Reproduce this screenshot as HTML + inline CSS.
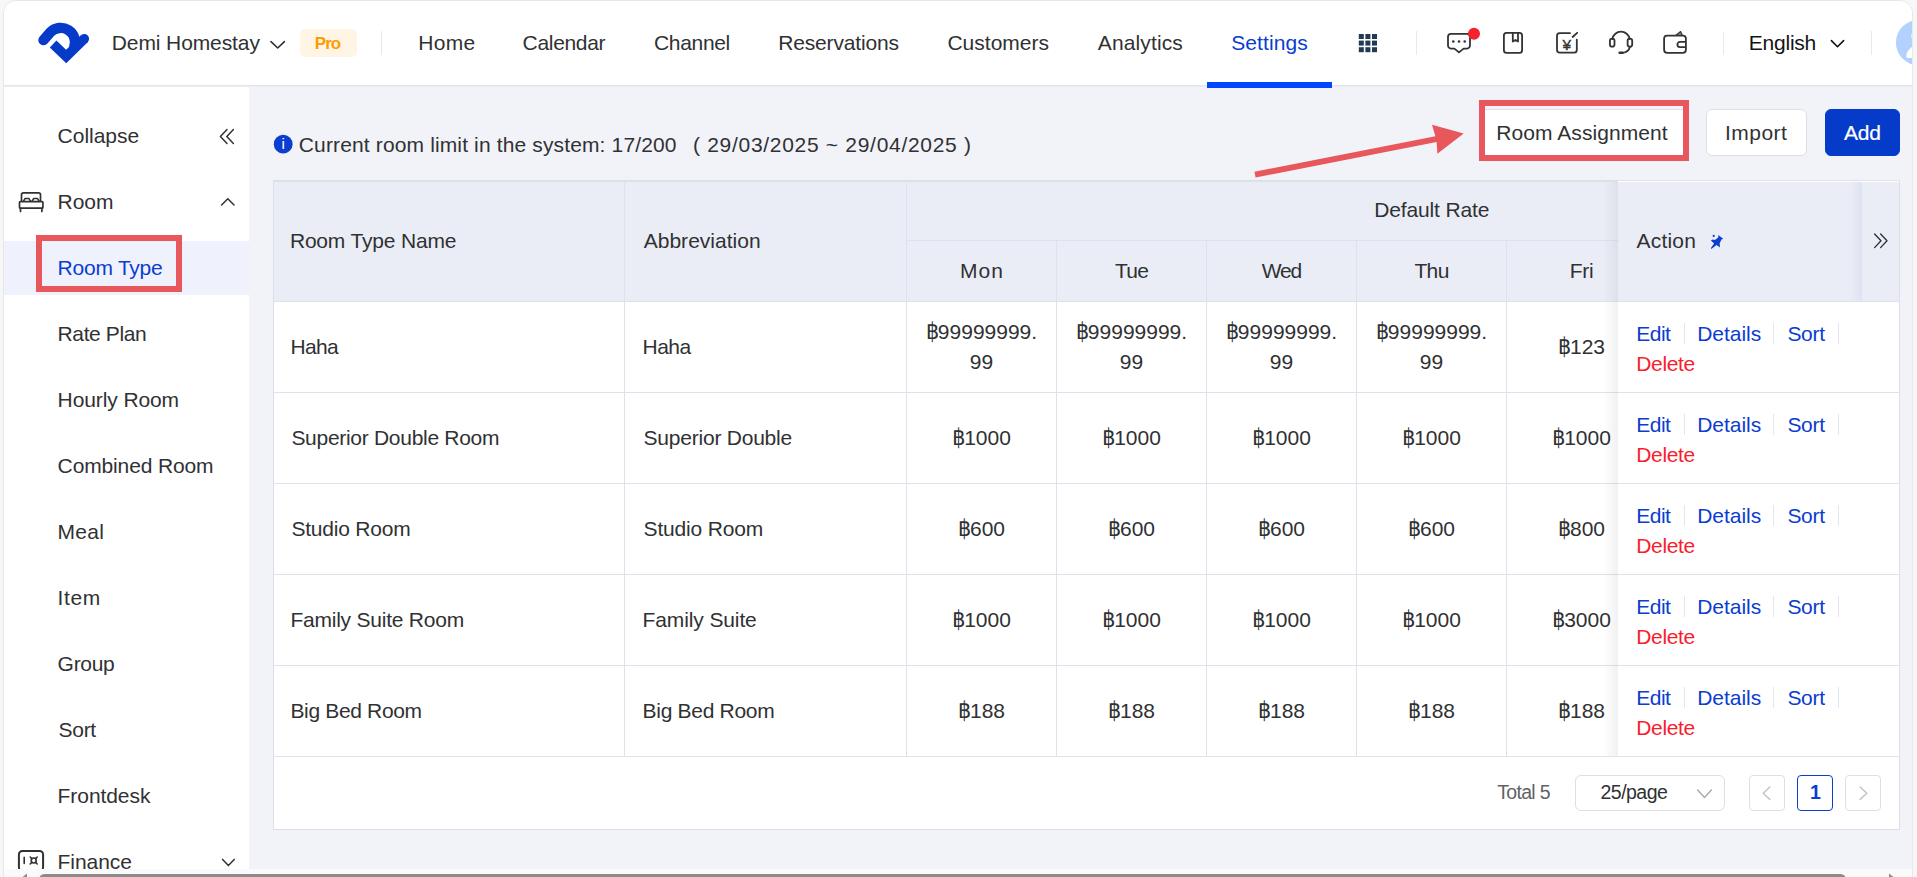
<!DOCTYPE html>
<html lang="en">
<head>
<meta charset="utf-8">
<title>Room Type - Settings</title>
<style>
*{box-sizing:border-box}
html,body{margin:0;padding:0}
body{width:1917px;height:877px;overflow:hidden;background:#f7f7f7;font-family:"Liberation Sans","DejaVu Sans",sans-serif;font-size:21px;color:#303133;position:relative}
.frame{position:absolute;left:3px;top:0;width:1910px;height:900px;border:1px solid #e7e7e7;border-radius:13px 13px 0 0;background:#f2f3f8;overflow:hidden}
/* .app uses page coordinates */
.app{position:absolute;left:-4px;top:-1px;width:1917px;height:877px}
.abs,.app>*{position:absolute}
.grp{position:absolute;left:0;top:0;width:0;height:0}
.t{position:absolute;white-space:nowrap;line-height:23px;height:23px;font-size:21px}
header{left:4px;top:1px;width:1908px;height:84px;background:#fff;box-shadow:0 1px 0 #e3e5ec,0 2px 0 #ecedf3}
.vdiv{width:1px;background:#e8e9ef}
.pro{left:300px;top:29px;width:57px;height:28px;border-radius:5px;background:#fff5e5}
.navline{left:1207px;top:82px;width:125px;height:6px;background:#0047ff}
aside{left:4px;top:87px;width:245px;height:783px;background:#fff}
.active{left:4px;top:241px;width:245px;height:54px;background:#eff2fd}
.redbox{border:6px solid #e8575b}
.btn{height:47px;top:109px;border:1px solid #dcdfe6;border-radius:6px;background:#fff}
.btn.primary{background:#053bc8;border-color:#053bc8}
/* table */
.tbl{left:273px;top:180px;width:1627px;height:650px;background:#fff;border:1px solid #dcdfe8;border-top:2px solid #dde0e9}
.thead{left:274px;top:182px;width:1625px;height:119px;background:#ebedf6}
.hl{height:1px;background:#dfe2ec}
.vl{width:1px;background:#dfe2ec}
.fixcol{left:1618px;top:181px;width:281px;height:575px;background:#fff}
.fixhead{left:1618px;top:182px;width:281px;height:119px;background:#ebedf6}
.shadowL{width:15px;background:linear-gradient(to right,rgba(0,0,0,0),rgba(0,0,20,.055))}
.rc{position:absolute;width:150px;text-align:center;line-height:23px;height:23px;font-size:21px;white-space:nowrap;color:#303133}
.rc .b{font-family:"DejaVu Sans",sans-serif;font-stretch:condensed;font-size:23px;letter-spacing:-1.2px;line-height:20px}
.adiv{width:1px;height:21px;background:#e4e6ee}
.pg{top:775px;height:36px;border:1px solid #dcdfe6;border-radius:4px;background:#fff}
.sb{left:4px;top:869px;width:1908px;height:10px;background:#fafafa}
.thumb{left:38.5px;top:874px;width:1807.5px;height:12px;border-radius:5.5px;background:#8b8b8b}
svg{position:absolute;overflow:visible}
</style>
</head>
<body>
<div class="frame"><div class="app">

<!-- ======= top navigation ======= -->
<header></header>
<div class="pro"></div>
<div class="vdiv" style="left:381px;top:31px;height:24px"></div>
<div class="vdiv" style="left:1416px;top:31px;height:24px"></div>
<div class="vdiv" style="left:1723px;top:32px;height:23px"></div>
<div class="vdiv" style="left:1871px;top:31px;height:24px"></div>
<div class="navline"></div>

<!-- ======= sidebar ======= -->
<aside></aside>
<div class="active"></div>
<svg style="left:0;top:0" width="1917" height="877" viewBox="0 0 1917 877" fill="none">
<!-- logo -->
<g stroke="#053bc8" fill="none">
<path d="M43.5 40.1 L50.5 32.1 A14.4 14.4 0 0 1 74.2 47.2" stroke-width="10.4" stroke-linecap="round"/>
<path d="M53.1 44 L66.2 56.5 L84.3 38.8" stroke-width="9.6" stroke-linejoin="miter"/>
</g>
<circle cx="84.3" cy="38.8" r="4.8" fill="#053bc8"/>
<!-- header chevrons -->
<g stroke="#303133" stroke-width="1.6" stroke-linecap="round" stroke-linejoin="round">
<path d="M271 41.6 L277.7 48 L284.4 41.6"/>
<path d="M1831.4 40.6 L1837.5 46.7 L1843.6 40.6" stroke="#141414"/>
</g>
<!-- app grid -->
<g fill="#223a54">
<rect x="1358.8" y="34" width="5" height="5"/><rect x="1365.4" y="34" width="5" height="5"/><rect x="1372" y="34" width="5" height="5"/>
<rect x="1358.8" y="40.6" width="5" height="5"/><rect x="1365.4" y="40.6" width="5" height="5"/><rect x="1372" y="40.6" width="5" height="5"/>
<rect x="1358.8" y="47.2" width="5" height="5"/><rect x="1365.4" y="47.2" width="5" height="5"/><rect x="1372" y="47.2" width="5" height="5"/>
</g>
<!-- message -->
<g stroke="#333" stroke-width="1.8" stroke-linejoin="round" stroke-linecap="round">
<path d="M1451 33.8 H1467 A3 3 0 0 1 1470 36.8 V45.6 A3 3 0 0 1 1467 48.6 H1463.6 L1459 52.4 L1454.4 48.6 H1451 A3 3 0 0 1 1448 45.6 V36.8 A3 3 0 0 1 1451 33.8 Z"/>
</g>
<g fill="#333"><circle cx="1453.3" cy="41.5" r="1.3"/><circle cx="1459" cy="41.5" r="1.3"/><circle cx="1464.7" cy="41.5" r="1.3"/></g>
<circle cx="1474" cy="33.8" r="6" fill="#f5222d"/>
<!-- book -->
<g stroke="#333" stroke-width="1.8" stroke-linejoin="round">
<rect x="1503.9" y="32.9" width="18.2" height="20" rx="2.6"/>
<path d="M1512.8 33 V41.6 L1515.4 39.9 L1518 41.6 V33"/>
</g>
<!-- yen note -->
<g stroke="#333" stroke-width="1.8" stroke-linecap="round" stroke-linejoin="round">
<path d="M1570 33.2 H1559.6 A2.6 2.6 0 0 0 1557 35.8 V50 A2.6 2.6 0 0 0 1559.6 52.6 H1574.2 A2.6 2.6 0 0 0 1576.8 50 V39.6"/>
<path d="M1572.6 37 L1577.2 32.8"/>
</g>
<text x="1566.9" y="49.9" font-size="15.5" text-anchor="middle" font-family="Liberation Sans, sans-serif" fill="#333" stroke="#333" stroke-width="0.35">¥</text>
<!-- headset -->
<g stroke="#333" stroke-width="1.8" stroke-linecap="round" stroke-linejoin="round">
<path d="M1612.4 39 A8.7 8.7 0 0 1 1629.6 39"/>
<rect x="1609.9" y="38.6" width="4.6" height="8" rx="2.2"/>
<rect x="1627.6" y="38.6" width="4.6" height="8" rx="2.2"/>
<path d="M1630 46.8 C1629 50.5 1626 52.6 1622.5 52.8"/>
<path d="M1619.6 52.8 H1622.6" stroke-width="2.4"/>
</g>
<!-- wallet -->
<g stroke="#333" stroke-width="1.8" stroke-linejoin="round">
<rect x="1664.1" y="35.6" width="21.8" height="17.2" rx="3"/>
<path d="M1686 41.9 H1680 A2.6 2.6 0 0 0 1680 47.1 H1686"/>
<path d="M1675.6 35.4 L1680.6 31.6 L1682.4 35.4 Z" fill="#8a8a8a" stroke-width="1.2"/>
</g>
<!-- avatar -->
<circle cx="1918.5" cy="42.6" r="22.6" fill="#b3d1ff"/>
<circle cx="1918.6" cy="36" r="7.2" fill="#fff"/>
<path d="M1906.3 56.4 A12.2 11 0 0 1 1930.7 56.4 Q1930.7 58 1929 58 H1908 Q1906.3 58 1906.3 56.4 Z" fill="#fff"/>
<!-- sidebar icons -->
<g stroke="#303133" stroke-width="1.5" stroke-linecap="round" stroke-linejoin="round">
<path d="M227 129.6 L220.4 136.5 L227 143.4 M233.4 129.6 L226.8 136.5 L233.4 143.4"/>
<path d="M221.6 205 L227.8 198.7 L234 205"/>
<path d="M222.6 859.4 L228.4 865.6 L234.2 859.4"/>
</g>
<g stroke="#303133" stroke-width="1.7" stroke-linejoin="round" stroke-linecap="round">
<path d="M21.5 201 V194.8 A2 2 0 0 1 23.5 192.8 H38.5 A2 2 0 0 1 40.5 194.8 V201"/>
<rect x="19.5" y="201.6" width="23.4" height="6.6" rx="0.8"/>
<path d="M20.5 208.4 V211.4 M41.9 208.4 V211.4"/>
<path d="M23.6 201 L25 198.6 H29 L30.4 201 M32.2 201 L33.6 198.6 H37.6 L39 201" stroke-width="1.5"/>
<!-- finance -->
<rect x="18.9" y="850.9" width="24.2" height="20" rx="3.6" stroke-width="2"/>
<path d="M24.2 857.4 V863.4 M30.2 857 L31.8 858.6 M37.2 857 L35.6 858.6 M30.2 864 L31.8 862.4 M37.2 864 L35.6 862.4" stroke-width="1.6"/>
<circle cx="33.7" cy="860.5" r="2.5" stroke-width="1.6"/>
</g>
<!-- info -->
<circle cx="283.2" cy="144.2" r="9.4" fill="#0a3dd0"/>
<text x="283.2" y="149.4" font-size="15" font-weight="400" text-anchor="middle" font-family="Liberation Sans, sans-serif" fill="#fff">i</text>
</svg>

<div class="redbox" style="left:36px;top:235px;width:146px;height:57px"></div>

<!-- ======= toolbar ======= -->
<div class="btn" style="left:1480px;width:208px"></div>
<div class="btn" style="left:1706px;width:101px"></div>
<div class="btn primary" style="left:1825px;width:75px"></div>
<div class="redbox" style="left:1479px;top:100px;width:210px;height:61px"></div>
<svg style="left:0;top:0" width="1917" height="877" viewBox="0 0 1917 877"><g fill="#e8575b" stroke="none">
<polygon points="1254.4,171.8 1435.4,136.2 1432,124.7 1463.7,133.4 1437.4,153.8 1436.6,142.0 1255.6,177.6"/>
</g></svg>


<!-- ======= table ======= -->
<div class="tbl"></div>
<div class="thead"></div>
<div class="hl" style="left:907px;top:240px;width:711px"></div>
<div class="hl" style="left:274px;top:301px;width:1625px"></div>
<div class="hl" style="left:274px;top:392px;width:1625px"></div>
<div class="hl" style="left:274px;top:483px;width:1625px"></div>
<div class="hl" style="left:274px;top:574px;width:1625px"></div>
<div class="hl" style="left:274px;top:665px;width:1625px"></div>
<div class="hl" style="left:274px;top:756px;width:1625px"></div>
<div class="vl" style="left:624px;top:181px;height:575px"></div>
<div class="vl" style="left:906px;top:181px;height:575px"></div>
<div class="vl" style="left:1056px;top:241px;height:515px"></div>
<div class="vl" style="left:1206px;top:241px;height:515px"></div>
<div class="vl" style="left:1356px;top:241px;height:515px"></div>
<div class="vl" style="left:1506px;top:241px;height:515px"></div>
<div class="rc" style="left:906.5px;top:320px"><span class="b">฿</span>99999999.</div>
<div class="rc" style="left:906.5px;top:350px">99</div>
<div class="rc" style="left:1056.5px;top:320px"><span class="b">฿</span>99999999.</div>
<div class="rc" style="left:1056.5px;top:350px">99</div>
<div class="rc" style="left:1206.5px;top:320px"><span class="b">฿</span>99999999.</div>
<div class="rc" style="left:1206.5px;top:350px">99</div>
<div class="rc" style="left:1356.5px;top:320px"><span class="b">฿</span>99999999.</div>
<div class="rc" style="left:1356.5px;top:350px">99</div>
<div class="rc" style="left:1506.5px;top:335px"><span class="b">฿</span>123</div>
<div class="rc" style="left:906.5px;top:426px"><span class="b">฿</span>1000</div>
<div class="rc" style="left:1056.5px;top:426px"><span class="b">฿</span>1000</div>
<div class="rc" style="left:1206.5px;top:426px"><span class="b">฿</span>1000</div>
<div class="rc" style="left:1356.5px;top:426px"><span class="b">฿</span>1000</div>
<div class="rc" style="left:1506.5px;top:426px"><span class="b">฿</span>1000</div>
<div class="rc" style="left:906.5px;top:517px"><span class="b">฿</span>600</div>
<div class="rc" style="left:1056.5px;top:517px"><span class="b">฿</span>600</div>
<div class="rc" style="left:1206.5px;top:517px"><span class="b">฿</span>600</div>
<div class="rc" style="left:1356.5px;top:517px"><span class="b">฿</span>600</div>
<div class="rc" style="left:1506.5px;top:517px"><span class="b">฿</span>800</div>
<div class="rc" style="left:906.5px;top:608px"><span class="b">฿</span>1000</div>
<div class="rc" style="left:1056.5px;top:608px"><span class="b">฿</span>1000</div>
<div class="rc" style="left:1206.5px;top:608px"><span class="b">฿</span>1000</div>
<div class="rc" style="left:1356.5px;top:608px"><span class="b">฿</span>1000</div>
<div class="rc" style="left:1506.5px;top:608px"><span class="b">฿</span>3000</div>
<div class="rc" style="left:906.5px;top:699px"><span class="b">฿</span>188</div>
<div class="rc" style="left:1056.5px;top:699px"><span class="b">฿</span>188</div>
<div class="rc" style="left:1206.5px;top:699px"><span class="b">฿</span>188</div>
<div class="rc" style="left:1356.5px;top:699px"><span class="b">฿</span>188</div>
<div class="rc" style="left:1506.5px;top:699px"><span class="b">฿</span>188</div>
<div class="fixcol"></div>
<div class="fixhead"></div>
<div class="shadowL" style="left:1603px;top:182px;height:574px"></div>
<div class="shadowL" style="left:1850px;top:182px;height:119px;width:12px;background:linear-gradient(to right,rgba(60,90,180,0),rgba(60,90,180,.07))"></div>
<div class="hl" style="left:1618px;top:301px;width:281px"></div>
<div class="hl" style="left:1618px;top:392px;width:281px"></div>
<div class="hl" style="left:1618px;top:483px;width:281px"></div>
<div class="hl" style="left:1618px;top:574px;width:281px"></div>
<div class="hl" style="left:1618px;top:665px;width:281px"></div>
<div class="adiv" style="left:1684px;top:323px"></div>
<div class="adiv" style="left:1773px;top:323px"></div>
<div class="adiv" style="left:1838px;top:323px"></div>
<div class="adiv" style="left:1684px;top:414px"></div>
<div class="adiv" style="left:1773px;top:414px"></div>
<div class="adiv" style="left:1838px;top:414px"></div>
<div class="adiv" style="left:1684px;top:505px"></div>
<div class="adiv" style="left:1773px;top:505px"></div>
<div class="adiv" style="left:1838px;top:505px"></div>
<div class="adiv" style="left:1684px;top:596px"></div>
<div class="adiv" style="left:1773px;top:596px"></div>
<div class="adiv" style="left:1838px;top:596px"></div>
<div class="adiv" style="left:1684px;top:687px"></div>
<div class="adiv" style="left:1773px;top:687px"></div>
<div class="adiv" style="left:1838px;top:687px"></div>

<!-- ======= pagination ======= -->
<div class="pg" style="left:1575px;width:150px;border-radius:6px"></div>
<div class="pg" style="left:1749px;width:36px"></div>
<div class="pg" style="left:1797px;width:36px;border-color:#0a3dd0"></div>
<div class="pg" style="left:1845px;width:36px"></div>

<svg style="left:0;top:0" width="1917" height="877" viewBox="0 0 1917 877" fill="none">
<!-- pin -->
<g fill="#0a3dd0"><circle cx="1713.7" cy="235.9" r="1.1"/>
<polygon points="1718.2,235 1723.2,238.7 1721.5,239.6 1719.7,243.2 1719.9,247.6 1716.6,244.9 1711.3,248.9 1710.9,248 1714.1,243.6 1710.9,240.5 1712.6,239.4 1715,240.1 1718.4,237.2"/></g>
<g stroke="#303133" stroke-width="1.35" stroke-linecap="round" stroke-linejoin="round">
<path d="M1874.6 234 L1881 240.8 L1874.6 247.6 M1880.6 234 L1887 240.8 L1880.6 247.6"/>
</g>
<g stroke="#a8abb2" stroke-width="1.5" stroke-linecap="round" stroke-linejoin="round">
<path d="M1697.6 790 L1704.5 797.4 L1711.4 790"/>
</g>
<g stroke="#c0c4cc" stroke-width="1.5" stroke-linecap="round" stroke-linejoin="round">
<path d="M1769.8 787 L1763.2 793.2 L1769.8 799.4"/>
<path d="M1860.2 787 L1866.8 793.2 L1860.2 799.4"/>
</g>
</svg>

<!-- ======= all text ======= -->
<nav class="grp" aria-label="Top navigation">
<span class="t" style="left:111.8px;top:31px;letter-spacing:-0.106px;">Demi Homestay</span>
<span class="t" style="left:314.8px;top:34px;line-height:19px;height:19px;letter-spacing:-0.977px;font-size:17px;color:#ff9b00;font-weight:700;">Pro</span>
<span class="t" style="left:418.3px;top:31px;letter-spacing:0.321px;">Home</span>
<span class="t" style="left:522.6px;top:31px;letter-spacing:-0.318px;">Calendar</span>
<span class="t" style="left:654.0px;top:31px;letter-spacing:-0.327px;">Channel</span>
<span class="t" style="left:778.3px;top:31px;letter-spacing:-0.178px;">Reservations</span>
<span class="t" style="left:947.4px;top:31px;letter-spacing:0.022px;">Customers</span>
<span class="t" style="left:1097.8px;top:31px;letter-spacing:0.121px;">Analytics</span>
<span class="t" style="left:1231.2px;top:31px;letter-spacing:0.089px;color:#0a3dd0;">Settings</span>
<span class="t" style="left:1748.8px;top:31px;letter-spacing:-0.233px;color:#141414;">English</span>
</nav>
<nav class="grp" aria-label="Settings menu">
<span class="t" style="left:57.6px;top:124px;letter-spacing:-0.019px;">Collapse</span>
<span class="t" style="left:57.6px;top:190px;letter-spacing:-0.041px;">Room</span>
<span class="t" style="left:57.6px;top:256px;letter-spacing:-0.237px;color:#0a3dd0;">Room Type</span>
<span class="t" style="left:57.6px;top:322px;letter-spacing:-0.393px;">Rate Plan</span>
<span class="t" style="left:57.6px;top:388px;letter-spacing:-0.104px;">Hourly Room</span>
<span class="t" style="left:57.6px;top:454px;letter-spacing:-0.132px;">Combined Room</span>
<span class="t" style="left:57.6px;top:520px;letter-spacing:0.283px;">Meal</span>
<span class="t" style="left:57.6px;top:586px;letter-spacing:0.617px;">Item</span>
<span class="t" style="left:57.6px;top:652px;letter-spacing:-0.297px;">Group</span>
<span class="t" style="left:58.6px;top:718px;letter-spacing:-0.326px;">Sort</span>
<span class="t" style="left:57.6px;top:784px;letter-spacing:-0.072px;">Frontdesk</span>
<span class="t" style="left:57.6px;top:850px;letter-spacing:-0.055px;">Finance</span>
</nav>
<section class="grp" aria-label="Toolbar">
<span class="t" style="left:298.8px;top:133px;letter-spacing:0.138px;">Current room limit in the system: 17/200</span>
<span class="t" style="left:693.0px;top:133px;letter-spacing:0.700px;">( 29/03/2025 ~ 29/04/2025 )</span>
<span class="t" style="left:1496.3px;top:121px;letter-spacing:0.062px;">Room Assignment</span>
<span class="t" style="left:1725.0px;top:121px;letter-spacing:0.464px;">Import</span>
<span class="t" style="left:1843.9px;top:121px;letter-spacing:-0.193px;color:#fff;-webkit-text-stroke:.2px #fff;">Add</span>
</section>
<section class="grp" aria-label="Table header">
<span class="t" style="left:289.9px;top:229px;letter-spacing:-0.181px;">Room Type Name</span>
<span class="t" style="left:643.7px;top:229px;letter-spacing:0.022px;">Abbreviation</span>
<span class="t" style="left:1374.2px;top:198px;letter-spacing:-0.141px;">Default Rate</span>
<span class="t" style="left:960.0px;top:259px;letter-spacing:1.064px;">Mon</span>
<span class="t" style="left:1115.0px;top:259px;letter-spacing:-0.714px;">Tue</span>
<span class="t" style="left:1261.8px;top:259px;letter-spacing:-1.200px;">Wed</span>
<span class="t" style="left:1414.4px;top:259px;letter-spacing:-0.603px;">Thu</span>
<span class="t" style="left:1569.7px;top:259px;letter-spacing:-0.260px;">Fri</span>
<span class="t" style="left:1636.5px;top:229px;letter-spacing:0.203px;">Action</span>
</section>
<section class="grp" aria-label="Table row 1">
<span class="t" style="left:290.4px;top:335px;letter-spacing:-0.608px;">Haha</span>
<span class="t" style="left:642.6px;top:335px;letter-spacing:-0.575px;">Haha</span>
<span class="t" style="left:1636.3px;top:322px;letter-spacing:-0.517px;color:#0a3dd0;">Edit</span>
<span class="t" style="left:1697.2px;top:322px;letter-spacing:-0.032px;color:#0a3dd0;">Details</span>
<span class="t" style="left:1787.4px;top:322px;letter-spacing:-0.293px;color:#0a3dd0;">Sort</span>
<span class="t" style="left:1636.3px;top:352px;letter-spacing:-0.345px;color:#f81d2d;">Delete</span>
</section>
<section class="grp" aria-label="Table row 2">
<span class="t" style="left:291.4px;top:426px;letter-spacing:-0.290px;">Superior Double Room</span>
<span class="t" style="left:643.6px;top:426px;letter-spacing:-0.227px;">Superior Double</span>
<span class="t" style="left:1636.3px;top:413px;letter-spacing:-0.517px;color:#0a3dd0;">Edit</span>
<span class="t" style="left:1697.2px;top:413px;letter-spacing:-0.032px;color:#0a3dd0;">Details</span>
<span class="t" style="left:1787.4px;top:413px;letter-spacing:-0.293px;color:#0a3dd0;">Sort</span>
<span class="t" style="left:1636.3px;top:443px;letter-spacing:-0.345px;color:#f81d2d;">Delete</span>
</section>
<section class="grp" aria-label="Table row 3">
<span class="t" style="left:291.4px;top:517px;letter-spacing:-0.210px;">Studio Room</span>
<span class="t" style="left:643.6px;top:517px;letter-spacing:-0.170px;">Studio Room</span>
<span class="t" style="left:1636.3px;top:504px;letter-spacing:-0.517px;color:#0a3dd0;">Edit</span>
<span class="t" style="left:1697.2px;top:504px;letter-spacing:-0.032px;color:#0a3dd0;">Details</span>
<span class="t" style="left:1787.4px;top:504px;letter-spacing:-0.293px;color:#0a3dd0;">Sort</span>
<span class="t" style="left:1636.3px;top:534px;letter-spacing:-0.345px;color:#f81d2d;">Delete</span>
</section>
<section class="grp" aria-label="Table row 4">
<span class="t" style="left:290.4px;top:608px;letter-spacing:-0.224px;">Family Suite Room</span>
<span class="t" style="left:642.6px;top:608px;letter-spacing:-0.123px;">Family Suite</span>
<span class="t" style="left:1636.3px;top:595px;letter-spacing:-0.517px;color:#0a3dd0;">Edit</span>
<span class="t" style="left:1697.2px;top:595px;letter-spacing:-0.032px;color:#0a3dd0;">Details</span>
<span class="t" style="left:1787.4px;top:595px;letter-spacing:-0.293px;color:#0a3dd0;">Sort</span>
<span class="t" style="left:1636.3px;top:625px;letter-spacing:-0.345px;color:#f81d2d;">Delete</span>
</section>
<section class="grp" aria-label="Table row 5">
<span class="t" style="left:290.4px;top:699px;letter-spacing:-0.337px;">Big Bed Room</span>
<span class="t" style="left:642.6px;top:699px;letter-spacing:-0.301px;">Big Bed Room</span>
<span class="t" style="left:1636.3px;top:686px;letter-spacing:-0.517px;color:#0a3dd0;">Edit</span>
<span class="t" style="left:1697.2px;top:686px;letter-spacing:-0.032px;color:#0a3dd0;">Details</span>
<span class="t" style="left:1787.4px;top:686px;letter-spacing:-0.293px;color:#0a3dd0;">Sort</span>
<span class="t" style="left:1636.3px;top:716px;letter-spacing:-0.345px;color:#f81d2d;">Delete</span>
</section>
<section class="grp" aria-label="Pagination">
<span class="t" style="left:1497.2px;top:781px;line-height:22px;height:22px;letter-spacing:-0.685px;font-size:19.5px;color:#606266;">Total 5</span>
<span class="t" style="left:1600.5px;top:781px;line-height:22px;height:22px;letter-spacing:-0.524px;font-size:19.5px;">25/page</span>
<span class="t" style="left:1810.0px;top:781px;line-height:22px;height:22px;font-size:19.5px;color:#0a3dd0;font-weight:700;">1</span>
</section>

<!-- ======= horizontal scrollbar ======= -->
<div class="sb"></div>
<div class="thumb"></div>
<svg style="left:4px;top:869px" width="1908" height="8" viewBox="4 869 1908 8"><g fill="#8b8b8b"><polygon points="19.5,879.3 27,873.6 27,885"/><polygon points="1896.5,879.3 1889,873.6 1889,885"/></g></svg>

</div></div>
</body>
</html>
